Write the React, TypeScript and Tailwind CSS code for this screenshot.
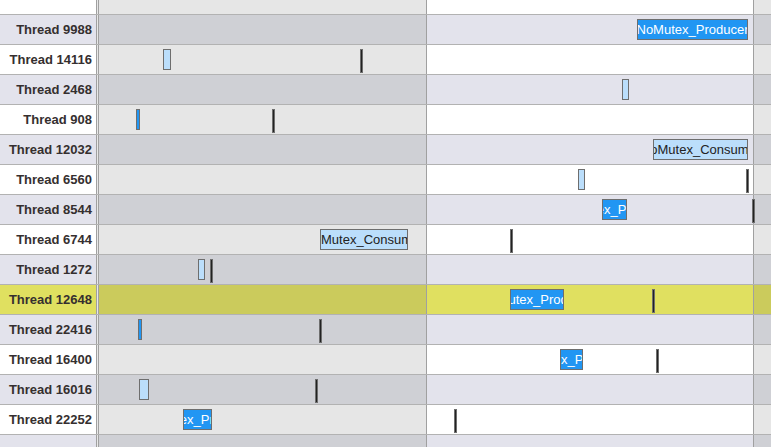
import React from "react";

type Box = { x: number; w: number; dark?: boolean; text?: string };
type Row = { name: string; boxes: Box[]; ticks: number[]; hl?: boolean };

const PROD = "NoMutex_Producer";
const CONS = "NoMutex_Consumer";

const rows: Row[] = [
  { name: "Thread 9988", boxes: [{ x: 637, w: 111, dark: true, text: PROD }], ticks: [] },
  { name: "Thread 14116", boxes: [{ x: 163, w: 8 }], ticks: [360] },
  { name: "Thread 2468", boxes: [{ x: 622, w: 7 }], ticks: [] },
  { name: "Thread 908", boxes: [{ x: 136, w: 4, dark: true }], ticks: [272] },
  { name: "Thread 12032", boxes: [{ x: 653, w: 95, text: CONS }], ticks: [] },
  { name: "Thread 6560", boxes: [{ x: 578, w: 7 }], ticks: [746] },
  { name: "Thread 8544", boxes: [{ x: 602, w: 25, dark: true, text: PROD }], ticks: [752] },
  { name: "Thread 6744", boxes: [{ x: 320, w: 88, text: CONS }], ticks: [510] },
  { name: "Thread 1272", boxes: [{ x: 198, w: 7 }], ticks: [210] },
  { name: "Thread 12648", boxes: [{ x: 510, w: 54, dark: true, text: PROD }], ticks: [652], hl: true },
  { name: "Thread 22416", boxes: [{ x: 138, w: 4, dark: true }], ticks: [319] },
  { name: "Thread 16400", boxes: [{ x: 560, w: 23, dark: true, text: PROD }], ticks: [656] },
  { name: "Thread 16016", boxes: [{ x: 139, w: 10 }], ticks: [315] },
  { name: "Thread 22252", boxes: [{ x: 183, w: 29, dark: true, text: PROD }], ticks: [454] },
];

// stripe: "w" = white row, "l" = lavender row, "y" = highlighted
function colors(kind: "w" | "l" | "y") {
  if (kind === "y") return { label: "bg-[#e0e060]", shade: "bg-[#cbcb5c]", open: "bg-[#e0e060]" };
  if (kind === "l") return { label: "bg-[#e3e3ec]", shade: "bg-[#cfd0d5]", open: "bg-[#e3e3ec]" };
  return { label: "bg-white", shade: "bg-[#e6e6e6]", open: "bg-white" };
}

function Lane({
  kind,
  h,
  top = true,
  children,
}: {
  kind: "w" | "l" | "y";
  h: string;
  top?: boolean;
  children?: React.ReactNode;
}) {
  const c = colors(kind);
  return (
    <div className={`relative flex ${h} ${top ? "border-t border-[#b2b2b2]" : ""}`}>
      <div className={`w-[96px] shrink-0 ${c.label} flex items-center justify-end pr-1`}>{children && (children as any)[0]}</div>
      <div className="w-[3px] shrink-0 border-x border-[#a0a0a0] bg-[#e8e8e8]" />
      <div className={`w-[327px] shrink-0 ${c.shade}`} />
      <div className="w-px shrink-0 bg-[#a0a0a0]" />
      <div className={`w-[326px] shrink-0 ${c.open}`} />
      <div className="w-px shrink-0 bg-[#a0a0a0]" />
      <div className={`flex-1 ${c.shade}`} />
      {children && (children as any)[1]}
    </div>
  );
}

export default function App() {
  return (
    <div
      className="h-[447px] w-[771px] overflow-hidden bg-white"
      style={{ fontFamily: '"Liberation Sans", Arial, sans-serif' }}
    >
      <Lane kind="w" h="h-[14px]" top={false} />
      {rows.map((row, i) => (
        <Lane key={row.name} kind={row.hl ? "y" : i % 2 === 0 ? "l" : "w"} h="h-[30px]">
          {[
            <span key="l" className="text-[13px] font-bold leading-none text-[#352f2f] whitespace-nowrap">
              {row.name}
            </span>,
            <React.Fragment key="m">
              {row.boxes.map((b, j) => (
                <div
                  key={"b" + j}
                  className={`absolute top-[4px] h-[21px] flex items-center justify-center overflow-hidden whitespace-nowrap border border-[#6e6e6e] text-[13px] leading-none ${
                    b.dark ? "bg-[#2196f3] text-white" : "bg-[#bbdefb] text-[#222]"
                  }`}
                  style={{ left: b.x, width: b.w }}
                >
                  {b.text && <span className="shrink-0">{b.text}</span>}
                </div>
              ))}
              {row.ticks.map((t, j) => (
                <div
                  key={"t" + j}
                  className="absolute top-[4px] h-[24px] w-[3px] border border-[#6e6e6e] bg-[#222]"
                  style={{ left: t }}
                />
              ))}
            </React.Fragment>,
          ]}
        </Lane>
      ))}
      <Lane kind="l" h="h-[13px]" />
    </div>
  );
}
